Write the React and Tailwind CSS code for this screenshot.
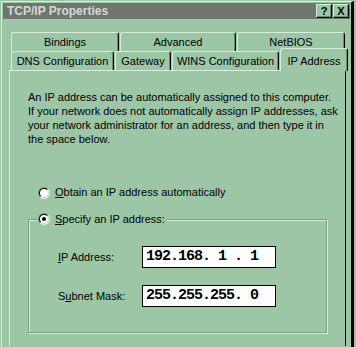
import React from "react";

const row1 = [
  { label: "Bindings", w: "w-[108px]" },
  { label: "Advanced", w: "w-[116px]" },
  { label: "NetBIOS", w: "w-[108px]" },
];

const row2 = [
  { label: "DNS Configuration", w: "w-[103px]" },
  { label: "Gateway", w: "w-[56px]" },
  { label: "WINS Configuration", w: "w-[107px]" },
];

const Tab = ({ label, w }) => (
  <div
    className={`${w} h-[19px] flex items-center justify-center border-l border-t border-r border-l-[#d7eedb] border-t-[#d7eedb] border-r-black rounded-t-[3px] shadow-[inset_-1px_0_0_#6b8f73]`}
  >
    {label}
  </div>
);

const Radio = ({ checked }) => (
  <span className="w-[12px] h-[12px] rounded-full border border-t-[#6b8f73] border-l-[#6b8f73] border-r-[#e4f3e7] border-b-[#e4f3e7] flex">
    <span className="flex-1 rounded-full bg-white border border-t-black border-l-black border-r-[#c3dec9] border-b-[#c3dec9] flex items-center justify-center">
      {checked && <span className="w-[4px] h-[4px] rounded-full bg-black" />}
    </span>
  </span>
);

const TitleButton = ({ children }) => (
  <div className="w-[16px] h-[14px] bg-[#9dc6a7] border-t border-l border-t-[#d7eedb] border-l-[#d7eedb] border-r border-b border-r-black border-b-black shadow-[inset_-1px_-1px_0_#6b8f73] flex items-center justify-center text-[11px] font-bold leading-none">
    {children}
  </div>
);

const IpField = ({ value }) => (
  <div className="w-[134px] h-[22px] bg-white border border-black flex items-center pl-[3px] font-['Liberation_Mono',monospace] font-bold text-[15px] tracking-[-1px] whitespace-pre">
    {value}
  </div>
);

export default function App() {
  return (
    <div className="w-[356px] h-[347px] overflow-hidden bg-[#9dc6a7] text-black font-['Liberation_Sans',Arial,sans-serif] text-[11px]">
      <div className="ml-px mt-px w-[353px] h-[346px] border-l border-t border-l-[#d7eedb] border-t-[#d7eedb] border-r-[3px] border-r-black p-px flex flex-col">
        {/* Title bar */}
        <div className="h-[16px] bg-[#6f756f] flex items-center justify-between pl-[4px] pr-[1px]">
          <span className="text-[12px] font-bold text-[#d5dbd5]">TCP/IP Properties</span>
          <div className="flex gap-px">
            <TitleButton>?</TitleButton>
            <TitleButton>X</TitleButton>
          </div>
        </div>

        {/* Tabs */}
        <div className="mt-[13px] ml-[8px] flex gap-px">
          {row1.map((t) => (
            <Tab key={t.label} {...t} />
          ))}
        </div>
        <div className="ml-[8px] flex items-end gap-px h-[19px]">
          {row2.map((t) => (
            <Tab key={t.label} {...t} />
          ))}
          <div className="relative top-px z-10 w-[68px] h-[23px] bg-[#9dc6a7] flex items-start justify-center pt-[4px] border-l border-t border-r border-l-[#d7eedb] border-t-[#d7eedb] border-r-black rounded-t-[3px] shadow-[inset_-1px_0_0_#6b8f73]">
            IP Address
          </div>
        </div>

        {/* Panel */}
        <div className="ml-[6px] w-[337px] flex-1 border-l border-t border-l-[#d7eedb] border-t-[#d7eedb] border-r border-r-black pl-[18px] pt-[19px]">
          <p className="leading-[14px]">
            An IP address can be automatically assigned to this computer.
            <br />
            If your network does not automatically assign IP addresses, ask
            <br />
            your network administrator for an address, and then type it in
            <br />
            the space below.
          </p>

          <div className="mt-[40px] ml-[10px] h-[13px] flex items-center gap-[5px]">
            <Radio />
            <span>
              <span className="underline">O</span>btain an IP address automatically
            </span>
          </div>

          <fieldset className="mt-[13px] w-[299px] h-[121px] border border-[#7a9e82] shadow-[inset_1px_1px_0_#d7eedb,1px_1px_0_#d7eedb]">
            <legend className="ml-[8px] pl-px pr-[2px] h-[14px] flex items-center gap-[5px] bg-[#9dc6a7]">
              <Radio checked />
              <span>
                <span className="underline">S</span>pecify an IP address:
              </span>
            </legend>
            <div className="mt-[20px] pl-[29px] flex items-center">
              <span className="w-[84px]">
                <span className="underline">I</span>P Address:
              </span>
              <IpField value="192.168. 1 . 1" />
            </div>
            <div className="mt-[17px] pl-[29px] flex items-center">
              <span className="w-[84px]">
                S<span className="underline">u</span>bnet Mask:
              </span>
              <IpField value="255.255.255. 0" />
            </div>
          </fieldset>
        </div>
      </div>
    </div>
  );
}
